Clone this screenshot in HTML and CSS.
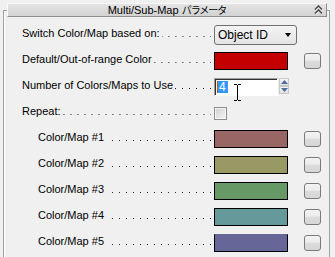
FILE: index.html
```html
<!DOCTYPE html>
<html>
<head>
<meta charset="utf-8">
<link rel="stylesheet" href="styles.css">
</head>
<body>
<div class="group">
  <div class="titlebar">
    <span class="title">Multi/Sub-Map <span class="jp">パラメータ</span></span>
    <svg class="chev" width="9" height="9" viewBox="0 0 9 9">
      <path d="M1 4.5 L4.5 1 L8 4.5" fill="none" stroke="#fff" stroke-width="1.6" transform="translate(0.6,0.6)"/>
      <path d="M1 8.5 L4.5 5 L8 8.5" fill="none" stroke="#fff" stroke-width="1.6" transform="translate(0.6,0.6)"/>
      <path d="M1 4.5 L4.5 1 L8 4.5" fill="none" stroke="#505050" stroke-width="1.6"/>
      <path d="M1 8.5 L4.5 5 L8 8.5" fill="none" stroke="#505050" stroke-width="1.6"/>
    </svg>
  </div>
  <div class="rows">
    <div class="row">
      <div class="lbl"><span>Switch Color/Map based on:</span><span class="dots"></span></div>
      <div class="ctl"><div class="select"><span>Object ID</span><span class="arrow"></span></div></div>
      <div class="bslot"></div>
    </div>
    <div class="row">
      <div class="lbl"><span>Default/Out-of-range Color</span><span class="dots"></span></div>
      <div class="ctl"><div class="swatch red"></div></div>
      <div class="bslot"><div class="btn"></div></div>
    </div>
    <div class="row">
      <div class="lbl"><span>Number of Colors/Maps to Use</span><span class="dots"></span></div>
      <div class="ctl spin">
        <div class="field"><span class="sel">4</span></div>
        <div class="spinbtns">
          <div class="sb"><svg width="7" height="4" viewBox="0 0 7 4"><path d="M0 4 L3.5 0 L7 4 Z" fill="#4b6ea5"/></svg></div>
          <div class="sb"><svg width="7" height="4" viewBox="0 0 7 4"><path d="M0 0 L3.5 4 L7 0 Z" fill="#4b6ea5"/></svg></div>
        </div>
        <svg class="ibeam" width="9" height="17" viewBox="0 0 9 17">
          <path d="M1 0.5 H4 M5 0.5 H8 M4.5 1 V16 M1 16.5 H4 M5 16.5 H8" stroke="#000" stroke-width="1" fill="none"/>
        </svg>
      </div>
      <div class="bslot"></div>
    </div>
    <div class="row">
      <div class="lbl"><span>Repeat:</span><span class="dots"></span></div>
      <div class="ctl"><div class="check"></div></div>
      <div class="bslot"></div>
    </div>
    <div class="row sub">
      <div class="lbl"><span>Color/Map #1</span><span class="dots"></span></div>
      <div class="ctl"><div class="swatch c1"></div></div>
      <div class="bslot"><div class="btn"></div></div>
    </div>
    <div class="row sub">
      <div class="lbl"><span>Color/Map #2</span><span class="dots"></span></div>
      <div class="ctl"><div class="swatch c2"></div></div>
      <div class="bslot"><div class="btn"></div></div>
    </div>
    <div class="row sub">
      <div class="lbl"><span>Color/Map #3</span><span class="dots"></span></div>
      <div class="ctl"><div class="swatch c3"></div></div>
      <div class="bslot"><div class="btn"></div></div>
    </div>
    <div class="row sub">
      <div class="lbl"><span>Color/Map #4</span><span class="dots"></span></div>
      <div class="ctl"><div class="swatch c4"></div></div>
      <div class="bslot"><div class="btn"></div></div>
    </div>
    <div class="row sub">
      <div class="lbl"><span>Color/Map #5</span><span class="dots"></span></div>
      <div class="ctl"><div class="swatch c5"></div></div>
      <div class="bslot"><div class="btn"></div></div>
    </div>
  </div>
</div>
</body>
</html>
```

FILE: styles.css
```css
html, body {
  margin: 0;
  padding: 0;
  width: 335px;
  height: 257px;
  overflow: hidden;
  background: #f0f0f0;
  font-family: "Liberation Sans", Arial, "Noto Sans CJK JP", sans-serif;
  font-size: 11px;
  color: #000;
}

.group {
  margin: 10px 0 0 3px;
  width: 327px;
  height: 247px;
  box-sizing: border-box;
  border: 1px solid #a0a0a0;
  border-bottom: none;
  box-shadow: inset 1px 1px 0 #fff;
}

.titlebar {
  margin: -8px 2px 0 3px;
  height: 12px;
  border: 1px solid;
  border-color: #fafafa #8e8e8e #8e8e8e #fafafa;
  background: linear-gradient(#e4e4e4, #d2d2d2);
  display: flex;
  align-items: center;
  justify-content: center;
  position: relative;
}

.title {
  line-height: 12px;
  white-space: nowrap;
}

.jp {
  font-family: "Noto Sans CJK JP", sans-serif;
  font-size: 10px;
  letter-spacing: -1px;
}

.chev {
  position: absolute;
  right: 3px;
  top: 1px;
}

.rows {
  margin-top: 5px;
}

.row {
  display: flex;
  align-items: center;
  height: 26px;
  padding: 0 8px 0 18px;
}

.row.sub {
  padding-left: 34px;
}

.lbl {
  flex: 1;
  display: flex;
  align-items: baseline;
  white-space: nowrap;
  line-height: 13px;
  margin-top: -3px;
}

.dots {
  flex: 1;
  height: 1px;
  margin: 0 3px 0 2px;
  background-image: linear-gradient(to right, transparent 6px, #1e1a38 6px);
  background-size: 7px 1px;
  background-repeat: repeat-x;
  background-position: right top;
}

.ctl {
  width: 90px;
  display: flex;
  align-items: center;
}

.bslot {
  width: 17px;
  display: flex;
  align-items: center;
}

.select {
  box-sizing: border-box;
  width: 83px;
  height: 20px;
  border: 1px solid #707070;
  border-radius: 3px;
  background: linear-gradient(#f4f4f4, #e4e4e4);
  display: flex;
  align-items: center;
  justify-content: space-between;
  padding: 0 5px 0 3px;
  font-size: 12px;
}

.arrow {
  width: 0;
  height: 0;
  border-left: 3.5px solid transparent;
  border-right: 3.5px solid transparent;
  border-top: 4px solid #000;
}

.swatch {
  width: 72px;
  height: 16px;
  border: 1px solid #000;
}

.red { background: #c40000; }
.c1 { background: #996666; }
.c2 { background: #999966; }
.c3 { background: #669966; }
.c4 { background: #669999; }
.c5 { background: #666699; border-top-color: #666699; }

.btn {
  width: 15px;
  height: 14px;
  border: 1px solid #7a7a7a;
  border-radius: 3px;
  background: linear-gradient(#f3f3f3 0%, #ececec 45%, #dcdcdc 50%, #d6d6d6 100%);
}

.spin {
  position: relative;
}

.field {
  width: 60px;
  height: 16px;
  border: 1px solid;
  border-color: #a0a0a0 #fff #fff #a0a0a0;
  box-shadow: inset 1px 1px 0 #303030;
  background: #fff;
  padding-left: 2px;
  display: flex;
  align-items: center;
}

.sel {
  background: #3399ff;
  color: #fff;
  border-left: 1px solid #c06010;
  padding: 0 2px 0 1px;
  line-height: 12px;
  font-size: 12px;
}

.spinbtns {
  margin-left: 1px;
  display: flex;
  flex-direction: column;
  align-self: flex-start;
}

.sb {
  width: 8px;
  height: 6px;
  border: 1px solid #c8c8c8;
  background: linear-gradient(#f4f4f4, #e0e0e0);
  display: flex;
  align-items: center;
  justify-content: center;
}

.ibeam {
  position: absolute;
  left: 19px;
  top: 6px;
}

.check {
  width: 11px;
  height: 11px;
  border: 1px solid #8e8e8e;
  box-shadow: inset 0 0 0 1px #f4f4f4;
  background: linear-gradient(135deg, #cfcfcf, #f6f6f6);
}
```
